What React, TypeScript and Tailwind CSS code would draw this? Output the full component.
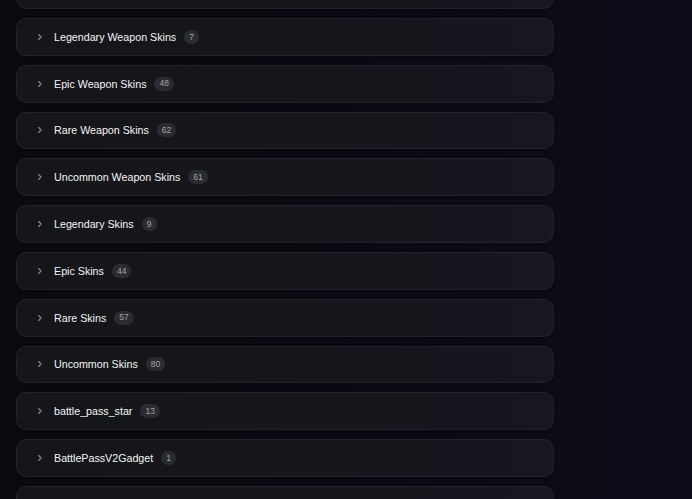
import React from "react";

const groups = [
  { name: "Rare Skins Bundle", count: 0, hidden: true },
  { name: "Legendary Weapon Skins", count: 7 },
  { name: "Epic Weapon Skins", count: 48 },
  { name: "Rare Weapon Skins", count: 62 },
  { name: "Uncommon Weapon Skins", count: 61 },
  { name: "Legendary Skins", count: 9 },
  { name: "Epic Skins", count: 44 },
  { name: "Rare Skins", count: 57 },
  { name: "Uncommon Skins", count: 80 },
  { name: "battle_pass_star", count: 13 },
  { name: "BattlePassV2Gadget", count: 1 },
  { name: "Common Skins", count: 0, hidden: true },
];

const Chevron = () => (
  <svg width="8" height="8" viewBox="0 0 8 8" fill="none" className="shrink-0">
    <path d="M2.6 1.5 5.1 4 2.6 6.5" stroke="#8b8c91" strokeWidth="1.1" strokeLinecap="round" strokeLinejoin="round" />
  </svg>
);

export default function App() {
  return (
    <div
      className="w-[692px] h-[499px] overflow-hidden bg-gradient-to-r from-[#0a0b0f] via-[#0a0b12] to-[#0b0c18]"
      style={{ fontFamily: '"Liberation Sans", Arial, sans-serif' }}
    >
      <div className="flex flex-col gap-[9px] w-[538px] ml-4 -mt-[28.8px]">
        {groups.map((g, i) => (
          <div
            key={i}
            className="h-[37.8px] shrink-0 rounded-[10px] border border-[#23242a] bg-gradient-to-r from-[#15161a] via-[#16171b] to-[#16171f] flex items-center pl-[19px] shadow-[0_1px_3px_rgba(0,0,0,0.4)]"
          >
            {!g.hidden && (
              <>
                <Chevron />
                <span className="ml-[10px] text-[10.7px] text-[#f4f4f6]">{g.name}</span>
                <span className="ml-2 h-[14px] min-w-[15px] px-[5px] rounded-full bg-[#2b2c31] text-[8.5px] text-[#a3a4a8] flex items-center justify-center leading-none">
                  {g.count}
                </span>
              </>
            )}
          </div>
        ))}
      </div>
    </div>
  );
}
